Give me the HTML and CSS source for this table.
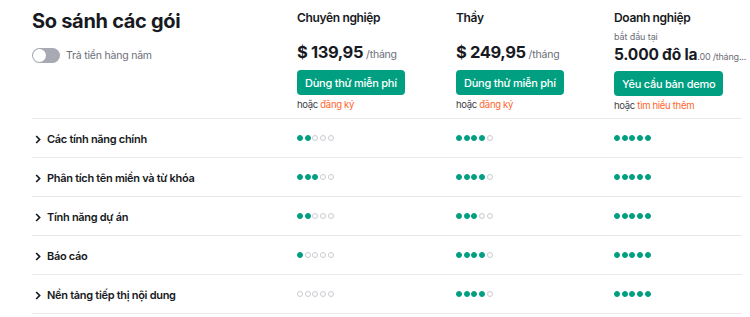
FILE: index.html
```html
<!DOCTYPE html>
<html lang="vi">
<head>
<meta charset="utf-8">
<link rel="stylesheet" href="styles.css">
</head>
<body>
<div class="page">
  <div class="head">
    <div class="intro">
      <h1 class="title">So sánh các gói</h1>
      <div class="billing">
        <span class="toggle"><span class="knob"></span></span>
        <span class="billing-label">Trả tiền hàng năm</span>
      </div>
    </div>
    <div class="plan">
      <div class="plan-name">Chuyên nghiệp</div>
      <div class="price"><span class="amount">$ 139,95</span> <span class="per">/tháng</span></div>
      <a class="btn">Dùng thử miễn phí</a>
      <div class="alt">hoặc <span class="link">đăng ký</span></div>
    </div>
    <div class="plan">
      <div class="plan-name">Thầy</div>
      <div class="price"><span class="amount">$ 249,95</span> <span class="per">/tháng</span></div>
      <a class="btn">Dùng thử miễn phí</a>
      <div class="alt">hoặc <span class="link">đăng ký</span></div>
    </div>
    <div class="plan">
      <div class="plan-name">Doanh nghiệp</div>
      <div class="from">bắt đầu tại</div>
      <div class="price ent"><span class="amount-ent">5.000 đô la</span><span class="cents">.00 /tháng...</span></div>
      <a class="btn">Yêu cầu bản demo</a>
      <div class="alt">hoặc <span class="link">tìm hiểu thêm</span></div>
    </div>
  </div>

  <div class="row">
    <div class="feature"><svg class="chev" width="6" height="9" viewBox="0 0 6 9"><path d="M1.2 1 L4.6 4.5 L1.2 8" fill="none" stroke="#171a22" stroke-width="1.7"/></svg>Các tính năng chính</div>
    <div class="dots"><i class="on"></i><i class="on"></i><i></i><i></i><i></i></div>
    <div class="dots"><i class="on"></i><i class="on"></i><i class="on"></i><i class="on"></i><i></i></div>
    <div class="dots"><i class="on"></i><i class="on"></i><i class="on"></i><i class="on"></i><i class="on"></i></div>
  </div>
  <div class="row">
    <div class="feature"><svg class="chev" width="6" height="9" viewBox="0 0 6 9"><path d="M1.2 1 L4.6 4.5 L1.2 8" fill="none" stroke="#171a22" stroke-width="1.7"/></svg>Phân tích tên miền và từ khóa</div>
    <div class="dots"><i class="on"></i><i class="on"></i><i class="on"></i><i></i><i></i></div>
    <div class="dots"><i class="on"></i><i class="on"></i><i class="on"></i><i class="on"></i><i></i></div>
    <div class="dots"><i class="on"></i><i class="on"></i><i class="on"></i><i class="on"></i><i class="on"></i></div>
  </div>
  <div class="row">
    <div class="feature"><svg class="chev" width="6" height="9" viewBox="0 0 6 9"><path d="M1.2 1 L4.6 4.5 L1.2 8" fill="none" stroke="#171a22" stroke-width="1.7"/></svg>Tính năng dự án</div>
    <div class="dots"><i class="on"></i><i class="on"></i><i></i><i></i><i></i></div>
    <div class="dots"><i class="on"></i><i class="on"></i><i class="on"></i><i></i><i></i></div>
    <div class="dots"><i class="on"></i><i class="on"></i><i class="on"></i><i class="on"></i><i class="on"></i></div>
  </div>
  <div class="row">
    <div class="feature"><svg class="chev" width="6" height="9" viewBox="0 0 6 9"><path d="M1.2 1 L4.6 4.5 L1.2 8" fill="none" stroke="#171a22" stroke-width="1.7"/></svg>Báo cáo</div>
    <div class="dots"><i class="on"></i><i></i><i></i><i></i><i></i></div>
    <div class="dots"><i class="on"></i><i class="on"></i><i class="on"></i><i class="on"></i><i></i></div>
    <div class="dots"><i class="on"></i><i class="on"></i><i class="on"></i><i class="on"></i><i class="on"></i></div>
  </div>
  <div class="row">
    <div class="feature"><svg class="chev" width="6" height="9" viewBox="0 0 6 9"><path d="M1.2 1 L4.6 4.5 L1.2 8" fill="none" stroke="#171a22" stroke-width="1.7"/></svg>Nền tảng tiếp thị nội dung</div>
    <div class="dots"><i></i><i></i><i></i><i></i><i></i></div>
    <div class="dots"><i class="on"></i><i class="on"></i><i class="on"></i><i class="on"></i><i></i></div>
    <div class="dots"><i class="on"></i><i class="on"></i><i class="on"></i><i class="on"></i><i class="on"></i></div>
  </div>
</div>
</body>
</html>
```

FILE: styles.css
```css
* { box-sizing: border-box; }
html, body { margin: 0; padding: 0; background: #fff; }
body {
  font-family: Inter, "Noto Sans", "Liberation Sans", sans-serif;
  color: #171a22;
  overflow: hidden;
}
.page {
  width: 710px;
  margin-left: 32px;
}
.head {
  display: grid;
  grid-template-columns: 265px 159px 158px 128px;
  height: 119px;
  border-bottom: 1px solid #e8e9ed;
}
.title {
  margin: 8px 0 0;
  font-size: 20px;
  font-weight: 700;
  line-height: 26px;
  letter-spacing: -0.3px;
}
.billing {
  display: flex;
  align-items: center;
  gap: 6px;
  margin-top: 14px;
}
.toggle {
  width: 28px;
  height: 15px;
  border-radius: 8px;
  background: #a7a9b3;
  display: flex;
  align-items: center;
  padding: 1px;
}
.knob {
  width: 13px;
  height: 13px;
  border-radius: 50%;
  background: #fff;
}
.billing-label {
  font-size: 10.5px;
  letter-spacing: -0.2px;
  color: #6c6e79;
}
.plan {
  padding-top: 10px;
  display: flex;
  flex-direction: column;
  align-items: flex-start;
}
.plan-name {
  font-size: 12px;
  font-weight: 600;
  line-height: 16px;
  letter-spacing: -0.35px;
}
.price {
  margin-top: 14px;
  line-height: 24px;
  height: 24px;
  display: flex;
  align-items: baseline;
  white-space: nowrap;
}
.amount {
  font-size: 16.5px;
  font-weight: 700;
  letter-spacing: -0.4px;
  margin-right: 3px;
}
.per {
  font-size: 10.5px;
  letter-spacing: -0.2px;
  color: #6c6e79;
}
.from {
  margin-top: 5px;
  font-size: 9px;
  letter-spacing: -0.1px;
  color: #6c6e79;
  line-height: 12px;
}
.price.ent {
  margin-top: 1px;
  height: 21px;
  line-height: 21px;
}
.amount-ent {
  font-size: 15.5px;
  font-weight: 700;
  letter-spacing: -0.2px;
}
.cents {
  font-size: 9px;
  letter-spacing: -0.2px;
  color: #6c6e79;
}
.btn {
  margin-top: 6px;
  height: 25px;
  padding: 0 8px;
  border-radius: 4px;
  background: #009f81;
  color: #fff;
  font-size: 11px;
  font-weight: 500;
  letter-spacing: -0.25px;
  display: flex;
  align-items: center;
  white-space: nowrap;
}
.alt {
  margin-top: 3px;
  font-size: 9.5px;
  letter-spacing: -0.3px;
  color: #3c3e48;
  line-height: 13px;
}
.link { color: #ff642d; }
.row {
  display: grid;
  grid-template-columns: 265px 159px 158px 128px;
  align-items: center;
  height: 39px;
  border-bottom: 1px solid #e8e9ed;
}
.feature {
  display: flex;
  align-items: center;
  font-size: 11px;
  font-weight: 600;
  letter-spacing: -0.3px;
  padding-left: 3px;
  padding-top: 2px;
}
.chev { margin-right: 6px; }
.dots {
  display: flex;
  gap: 1.7px;
}
.dots i {
  width: 6px;
  height: 6px;
  border-radius: 50%;
  border: 1px solid #c9cbd2;
}
.dots i.on {
  background: #009f81;
  border-color: #009f81;
}
```
